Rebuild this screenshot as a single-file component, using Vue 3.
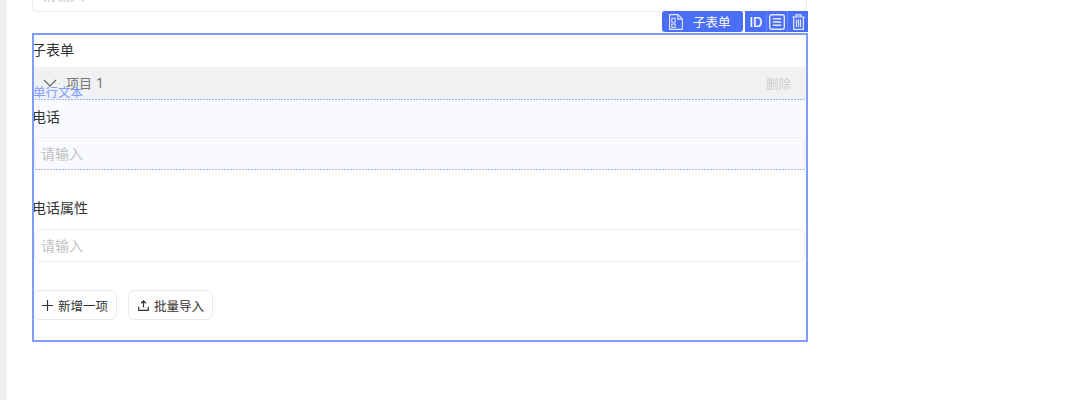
<script setup>
const items = ['电话属性']
</script>

<template>
  <div class="page">
    <aside class="rail"></aside>
    <main class="canvas">
      <div class="ghost-input"><span class="ph ghost-ph">请输入</span></div>
      <div class="toolbar">
        <div class="tool-main">
          <svg class="tool-icon" width="14" height="16" viewBox="0 0 14 16" fill="none" stroke="#e4e9ff" stroke-width="1.1">
            <path d="M.6.6h8.300l4.500 4.500v10.300H.6z" />
            <path d="M8.900.6v4.500h4.500" />
            <rect x="2.800" y="4.300" width="3.400" height="3.800" stroke-width="1" />
            <rect x="2.800" y="10" width="3.400" height="3.400" stroke-width="1" />
          </svg>
          <span class="tool-label">子表单</span>
        </div>
        <div class="tool-group">
          <div class="tool-btn id">ID</div>
          <div class="tool-btn">
            <svg width="16" height="16" viewBox="0 0 16 16" fill="none" stroke="#e4e9ff" stroke-width="1.400">
              <rect x=".7" y=".7" width="14.600" height="14.600" rx="2" />
              <path d="M3.800 4.800h8.400M3.800 8h8.400M3.800 11.200h8.400" stroke-width="1.600" />
            </svg>
          </div>
          <div class="tool-btn">
            <svg width="13" height="16" viewBox="0 0 13 16" fill="none" stroke="#e4e9ff" stroke-width="1.200">
              <path d="M.2 3h12.600M4 3V.8h5V3" />
              <path d="M1.700 3v12.300h9.600V3" />
              <path d="M4.500 5.500v7.500M6.500 5.500v7.500M8.500 5.500v7.500" />
            </svg>
          </div>
        </div>
      </div>
      <section class="subform">
        <div class="form-title">子表单</div>
        <div class="item-head">
          <svg class="chevron" width="14" height="8" viewBox="0 0 14 8" fill="none" stroke="#666" stroke-width="1.200">
            <path d="M1 1l6 6 6-6" />
          </svg>
          <span class="item-name">项目 1</span>
          <span class="delete">删除</span>
        </div>
        <span class="float-label">单行文本</span>
        <div class="field active">
          <div class="label">电话</div>
          <div class="input"><span class="ph">请输入</span></div>
        </div>
        <div v-for="name in items" :key="name" class="field plain">
          <div class="label">{{ name }}</div>
          <div class="input"><span class="ph">请输入</span></div>
        </div>
        <div class="actions">
          <button class="btn">
            <svg width="11" height="11" viewBox="0 0 11 11" fill="none" stroke="#333" stroke-width="1.200">
              <path d="M5.500 0v11M0 5.500h11" />
            </svg>
            <span>新增一项</span>
          </button>
          <button class="btn second">
            <svg width="11" height="11" viewBox="0 0 11 11" fill="none" stroke="#333" stroke-width="1.200">
              <path d="M5.500 7.500V1M3 3.300L5.500 .9 8 3.300M.7 6.800v3.500h9.600V6.800" />
            </svg>
            <span>批量导入</span>
          </button>
        </div>
      </section>
    </main>
  </div>
</template>

<style>
body { background: #fff; }
</style>

<style scoped>
.page {
  display: flex;
  width: 1080px;
  height: 400px;
  overflow: hidden;
  background: #fff;
  font-family: "Noto Sans CJK SC", "Noto Sans", sans-serif;
  color: #333;
}
.rail { width: 7px; background: #f0f1f3; flex: none; }
.canvas { width: 776px; margin-left: 25px; }
.ghost-input {
  height: 12px;
  width: 775px;
  box-sizing: border-box;
  border: 1px solid #ececec;
  border-top: 0;
  border-radius: 0 0 6px 6px;
  overflow: hidden;
  padding-left: 9px;
}
.ghost-ph { display: block; margin-top: -16px; }
.ph { font-size: 14px; line-height: 20px; color: #bfbfbf; }
.toolbar {
  display: flex;
  justify-content: flex-end;
  height: 21px;
  margin-top: -1px;
  gap: 2px;
}
.tool-main {
  width: 81px;
  display: flex;
  align-items: center;
  background: #4a6ef5;
  border-radius: 3px;
  color: #fff;
  font-size: 12.500px;
  padding-left: 7px;
  box-sizing: border-box;
}
.tool-label { margin-left: 10px; }
.tool-group { display: flex; background: #4a6ef5; width: 63px; }
.tool-btn {
  flex: 1;
  display: flex;
  align-items: center;
  justify-content: center;
  border-left: 1px solid #6685f7;
  color: #fff;
}
.tool-btn:first-child { border-left: 0; }
.id { font-size: 13px; font-family: "Inter", sans-serif; font-weight: 500; padding-left: 1px; }
.subform {
  position: relative;
  height: 309px;
  box-sizing: border-box;
  outline: 2px solid #7f9dff;
  outline-offset: -2px;
  margin-top: 1px;
}
.form-title { height: 34px; font-size: 14px; line-height: 32px; }
.item-head {
  height: 32px;
  background: #f0f1f2;
  display: flex;
  align-items: center;
  padding: 0 17px 0 11px;
  font-size: 13px;
  color: #777;
  box-sizing: border-box;
}
.chevron { flex: none; }
.item-name { margin: 0 0 2px 9px; font-family: "Inter", "Noto Sans CJK SC", sans-serif; word-spacing: 1px; }
.delete { margin-left: auto; font-size: 12.500px; color: #cdcdcd; }
.float-label {
  position: absolute;
  left: 1px;
  top: 51px;
  font-size: 12.500px;
  line-height: 16px;
  color: #7f9dff;
}
.field { box-sizing: border-box; }
.active {
  height: 71px;
  padding-top: 1px;
  background-color: #f9faff;
  background-image:
    repeating-linear-gradient(90deg, #a3b3fc 0 2px, transparent 2px 3px),
    repeating-linear-gradient(90deg, #a3b3fc 0 2px, transparent 2px 3px);
  background-size: 100% 1px;
  background-position: top, bottom;
  background-repeat: no-repeat;
}
.plain { height: 92px; padding-top: 21px; }
.label { height: 37px; font-size: 14px; line-height: 32px; }
.plain .label { height: 38px; }
.input {
  height: 33px;
  margin: 0 3px 0 2px;
  box-sizing: border-box;
  border: 1px solid #ececec;
  border-radius: 6px;
  padding: 0 6px 2px;
  display: flex;
  align-items: center;
}
.active .input { border-bottom: 0; }
.actions { display: flex; gap: 11px; margin: 28px 0 0 1px; }
.btn {
  height: 30px;
  display: flex;
  align-items: center;
  gap: 5px;
  padding: 0 8px;
  background: #fff;
  border: 1px solid #eaeaea;
  border-radius: 6px;
  font: inherit;
  font-size: 12.500px;
  color: #333;
}
.second { padding-left: 9px; }
</style>
